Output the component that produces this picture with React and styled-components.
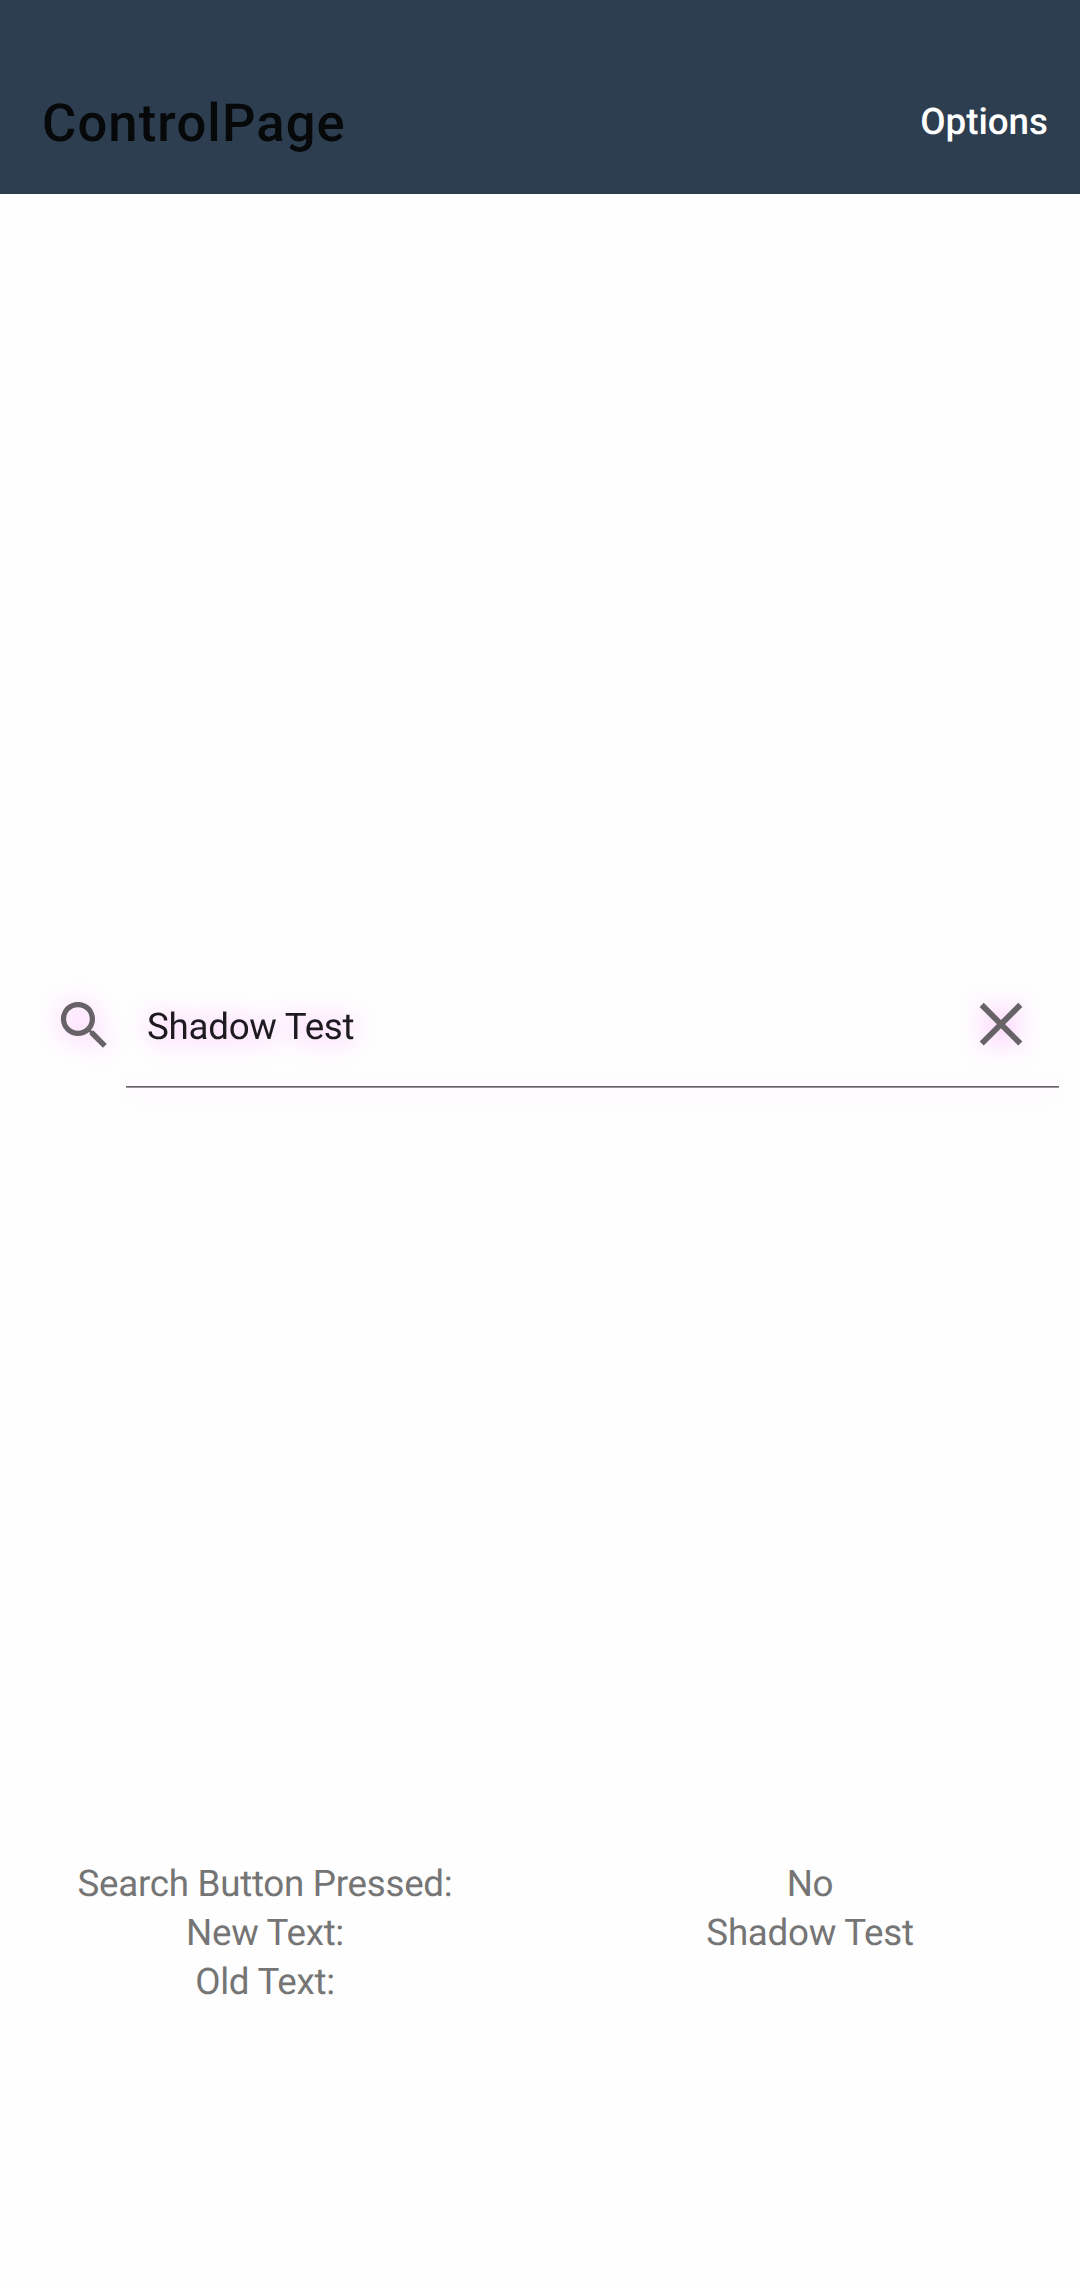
import React from "react";
import styled, { createGlobalStyle } from "styled-components";

const Global = createGlobalStyle`
  *{box-sizing:border-box}
  body{margin:0;background:#fefefe;font-family:Roboto,sans-serif;text-rendering:geometricPrecision}
`;
const Page = styled.div`height:2289px;display:flex;flex-direction:column;overflow:hidden;`;
const Bar = styled.header`
  height:194px;flex:none;background:#2d3e50;padding:50px 32px 0 42px;
  display:flex;align-items:center;justify-content:space-between;
`;
const Title = styled.h1`margin:0;padding-top:2px;font-size:52.5px;font-weight:500;letter-spacing:1.15px;color:#060809;line-height:62px;`;
const Option = styled.span`font-size:36.75px;font-weight:500;color:#fff;line-height:44px;`;
const SearchRow = styled.div`margin:768px 21px 0 0;height:126px;flex:none;display:flex;`;
const IconBox = styled.div`
  width:126px;padding:32px 0 0 53px;flex:none;color:#676267;
  filter:drop-shadow(0 2px 13px rgba(255,0,255,.32));
`;
const Field = styled.div`flex:1;display:flex;flex-direction:column;`;
const Entry = styled.div`
  flex:1;display:flex;align-items:center;justify-content:space-between;padding:0 35px 0 21px;color:#676267;
  filter:drop-shadow(0 2px 13px rgba(255,0,255,.36));
`;
const Underline = styled.div`
  height:2px;border-top:1px solid #676267;background:#989598;
  filter:drop-shadow(0 2px 12px rgba(255,0,255,.16));
`;
const Query = styled.span`font-size:36.75px;letter-spacing:-.28px;color:#1d1b20;line-height:44px;padding-top:5px;`;
const Results = styled.div`margin-top:771px;display:grid;grid-template-columns:530px 1fr;column-gap:10px;`;
const Column = styled.div`text-align:center;font-size:36.75px;letter-spacing:-.28px;line-height:49px;color:#757575;`;

export default function App() {
  return <Page><Global />
    <Bar><Title>ControlPage</Title><Option>Options</Option></Bar>
    <SearchRow>
      <IconBox><svg width="63" height="63" viewBox="0 0 24 24" fill="currentColor"><path d="M15.5 14h-.79l-.28-.27A6.47 6.47 0 0 0 16 9.5 6.5 6.5 0 1 0 9.5 16c1.61 0 3.09-.59 4.23-1.57l.27.28v.79l5 4.99L20.49 19zm-6 0a4.5 4.5 0 1 1 0-9 4.5 4.5 0 0 1 0 9z"/></svg></IconBox>
      <Field>
        <Entry><Query>Shadow Test</Query><svg width="46" height="46" viewBox="0 0 46 46" stroke="currentColor" strokeWidth="5.8"><path d="M3.7 3.9L42.3 42.5M42.3 3.9L3.7 42.5"/></svg></Entry>
        <Underline />
      </Field>
    </SearchRow>
    <Results>
      <Column><div>Search Button Pressed:</div><div>New Text:</div><div>Old Text:</div></Column>
      <Column><div>No</div><div>Shadow Test</div></Column>
    </Results>
  </Page>;
}
